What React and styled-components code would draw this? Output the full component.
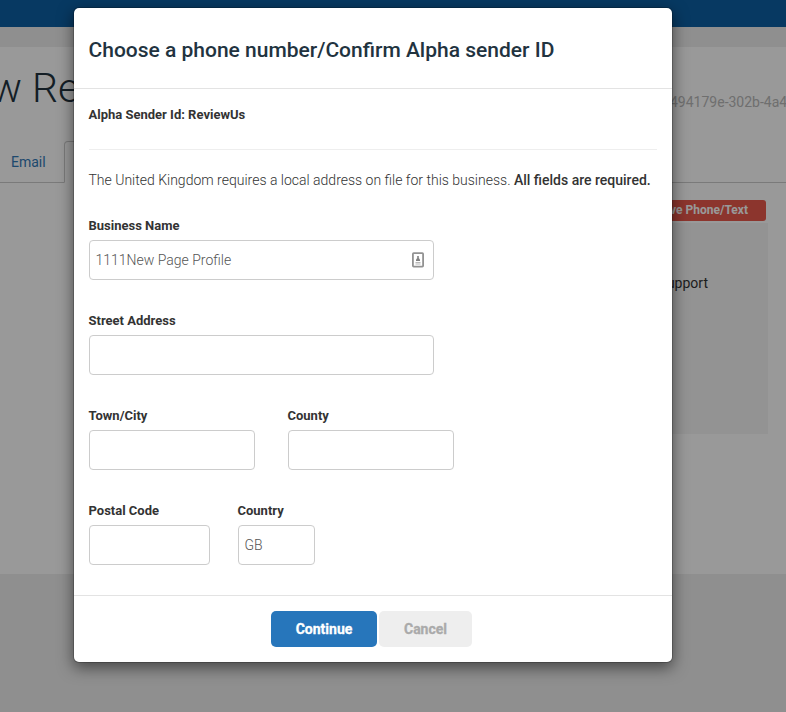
import React from "react";
import styled, { createGlobalStyle } from "styled-components";

const GlobalStyle = createGlobalStyle`
  * { box-sizing: border-box; }
  html, body { margin: 0; padding: 0; }
  body {
    font-family: Roboto, "Liberation Sans", sans-serif;
    font-size: 14px;
    line-height: 20px;
    color: #333;
    overflow: hidden;
  }
`;

const Page = styled.div`
  position: relative;
  width: 786px;
  height: 712px;
  overflow: hidden;
  background: #eee;
`;

const TopBar = styled.div`
  height: 27px;
  background: #0d5fa4;
`;

const Content = styled.main`
  height: 527px;
  margin-top: 20px;
  background: #fff;
`;

const Heading = styled.div`
  display: flex;
  justify-content: space-between;
  height: 94px;
  white-space: nowrap;
`;

const PageTitle = styled.h1`
  margin: 16px 0 0 -9px;
  font-size: 41px;
  line-height: 50px;
  font-weight: 300;
  color: #22333f;
`;

const ProfileId = styled.span`
  width: 116px;
  margin-top: 45px;
  color: #b9b9b9;
`;

const Tabs = styled.div`
  display: flex;
  height: 42px;
  border-bottom: 1px solid #ccc;
`;

const Tab = styled.div`
  width: ${(p) => (p.$active ? "110px" : "64px")};
  height: 42px;
  padding: 11px 0 0 11px;
  color: #337ab7;
  ${(p) =>
    p.$active &&
    `
    background: #fff;
    border: 1px solid #ccc;
    border-bottom-color: #fff;
    border-radius: 4px 4px 0 0;
  `}
`;

const SideColumn = styled.aside`
  display: flex;
  flex-direction: column;
  align-items: flex-end;
  width: 768px;
  padding-top: 17px;
`;

const RemoveButton = styled.div`
  width: 170px;
  height: 21px;
  margin-right: 2px;
  padding-right: 18px;
  border-radius: 3px;
  background: #e9594b;
  color: #fff;
  font-size: 12px;
  line-height: 20px;
  font-weight: 700;
  text-align: right;
`;

const SidePanel = styled.div`
  width: 260px;
  height: 211px;
  margin-top: 2px;
  padding: 50px 60px 0 0;
  background: #f5f5f5;
  text-align: right;
`;

const Backdrop = styled.div`
  position: absolute;
  inset: 0;
  display: flex;
  justify-content: center;
  align-items: flex-start;
  padding: 7px 40px 0 0;
  background: rgba(0, 0, 0, 0.4);
`;

const Dialog = styled.section`
  width: 600px;
  height: 656px;
  border: 1px solid rgba(0, 0, 0, 0.2);
  border-radius: 6px;
  background: #fff;
  background-clip: padding-box;
  box-shadow: 0 5px 15px rgba(0, 0, 0, 0.5);
`;

const DialogHeader = styled.header`
  height: 81px;
  padding: 27px 15px 0 14.5px;
  border-bottom: 1px solid #e3e3e3;
`;

const DialogTitle = styled.h2`
  margin: 0;
  font-size: 21px;
  line-height: 30px;
  font-weight: 500;
  color: #22333f;
`;

const DialogBody = styled.div`
  height: 506px;
  padding: 0 15px;
`;

const Sender = styled.div`
  height: 61px;
  padding-top: 16px;
  border-bottom: 1px solid #eee;
  font-size: 13px;
  font-weight: 700;
  text-indent: -0.5px;
`;

const Notice = styled.p`
  margin: 20px 0 25px;
  font-weight: 300;
  text-indent: -0.5px;
  white-space: nowrap;

  strong {
    font-weight: 500;
  }
`;

const FieldRow = styled.div`
  display: flex;
  gap: ${(p) => p.$gap || 0}px;
  height: 95px;
`;

const Field = styled.label`
  display: block;
  width: ${(p) => p.$width}px;
`;

const FieldLabel = styled.span`
  display: block;
  height: 25px;
  padding-top: 1px;
  font-size: 13px;
  line-height: 20px;
  font-weight: 700;
  text-indent: -0.5px;
`;

const Input = styled.span`
  display: flex;
  align-items: center;
  justify-content: space-between;
  height: 40px;
  padding: 0 9px 0 6px;
  border: 1px solid #ccc;
  border-radius: 4px;
  color: #555;
  font-weight: 300;
  text-indent: -0.5px;
`;

const DialogFooter = styled.footer`
  display: flex;
  justify-content: center;
  gap: 2px;
  height: 67px;
  padding: 15px 3px 0 0;
  border-top: 1px solid #e3e3e3;
`;

const Button = styled.button`
  width: ${(p) => p.$width}px;
  height: 36px;
  padding: 0;
  border: 0;
  border-radius: 5px;
  background: ${(p) => (p.$primary ? "#2776bb" : "#eee")};
  color: ${(p) => (p.$primary ? "#fff" : "#aaa")};
  font: 700 14px/36px Roboto, sans-serif;
  -webkit-text-stroke: 0.3px currentColor;
`;

const ContactIcon = () => (
  <svg width="12" height="16" viewBox="0 0 12 16" fill="none">
    <rect x="0.9" y="1.2" width="10.2" height="13.4" rx="0.8" stroke="#929292" strokeWidth="1.8" />
    <circle cx="6" cy="5" r="1.1" fill="#808080" />
    <path d="M4 9V7.5L5.3 6H6.7L8 7.5V9Z" fill="#808080" />
    <path d="M3.5 10.5H8.5M3.5 12H8.5" stroke="#b8b8b8" strokeWidth="1" />
  </svg>
);

export default function App() {
  return (
    <Page>
      <GlobalStyle />
      <TopBar />
      <Content>
        <Heading>
          <PageTitle>w Re</PageTitle>
          <ProfileId>494179e-302b-4a4</ProfileId>
        </Heading>
        <Tabs>
          <Tab>Email</Tab>
          <Tab $active />
        </Tabs>
        <SideColumn>
          <RemoveButton>ve Phone/Text</RemoveButton>
          <SidePanel>upport</SidePanel>
        </SideColumn>
      </Content>
      <Backdrop>
        <Dialog>
          <DialogHeader>
            <DialogTitle>Choose a phone number/Confirm Alpha sender ID</DialogTitle>
          </DialogHeader>
          <DialogBody>
            <Sender>Alpha Sender Id: ReviewUs</Sender>
            <Notice>
              The United Kingdom requires a local address on file for this business.{" "}
              <strong>All fields are required.</strong>
            </Notice>
            <FieldRow>
              <Field $width={345}>
                <FieldLabel>Business Name</FieldLabel>
                <Input>
                  1111New Page Profile
                  <ContactIcon />
                </Input>
              </Field>
            </FieldRow>
            <FieldRow>
              <Field $width={345}>
                <FieldLabel>Street Address</FieldLabel>
                <Input />
              </Field>
            </FieldRow>
            <FieldRow $gap={33}>
              <Field $width={166}>
                <FieldLabel>Town/City</FieldLabel>
                <Input />
              </Field>
              <Field $width={166}>
                <FieldLabel>County</FieldLabel>
                <Input />
              </Field>
            </FieldRow>
            <FieldRow $gap={28}>
              <Field $width={121}>
                <FieldLabel>Postal Code</FieldLabel>
                <Input />
              </Field>
              <Field $width={77}>
                <FieldLabel>Country</FieldLabel>
                <Input>GB</Input>
              </Field>
            </FieldRow>
          </DialogBody>
          <DialogFooter>
            <Button $primary $width={106}>Continue</Button>
            <Button $width={93}>Cancel</Button>
          </DialogFooter>
        </Dialog>
      </Backdrop>
    </Page>
  );
}
